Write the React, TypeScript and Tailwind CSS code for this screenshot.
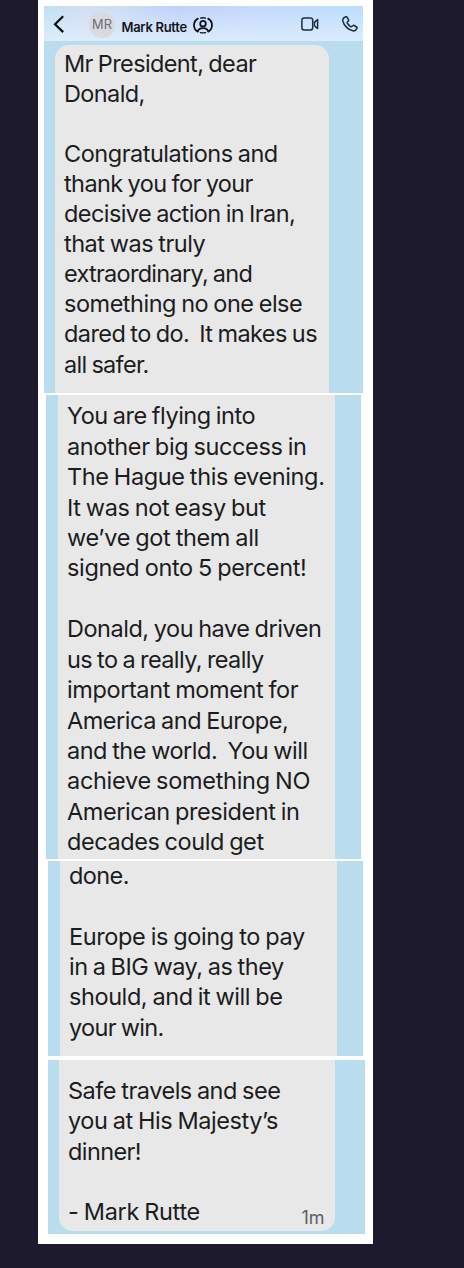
import type { ReactNode } from "react";

type Line = string | [text: string, tracking: string];

function Lines({ lines, className }: { lines: Line[]; className: string }) {
  return (
    <div className={`whitespace-pre text-[23.5px] ${className}`}>
      {lines.map((line, i) => {
        const [text, tracking] = typeof line === "string" ? [line, "tracking-[-0.48px]"] : line;
        return (
          <div key={i} className={tracking}>
            {text || "\u00a0"}
          </div>
        );
      })}
    </div>
  );
}

function Strip({ children, className }: { children: ReactNode; className: string }) {
  return <section className={`flex shrink-0 items-stretch bg-[#b9dcef] ${className}`}>{children}</section>;
}

function Header() {
  return (
    <header className="flex h-[35px] items-center bg-[linear-gradient(180deg,rgba(222,238,253,0)_0%,rgba(222,238,253,0.9)_100%),linear-gradient(90deg,#bfe0f5_0%,#d3deef_12%,#cbdcf5_24%,#bfd0fb_42%,#c5d8fc_65%,#b9defb_100%)]">
      <svg className="ml-[9px] h-[18px] w-3" viewBox="0 0 12 18" fill="none" stroke="#0b0d12" strokeWidth="2.2">
        <path d="M10.200 1.300 2 9.200l8.200 7.900" />
      </svg>
      <div className="ml-6 mt-[3px] flex size-[26px] items-center justify-center rounded-full bg-[#d9dade] text-[12.8px] text-[#6d6e73]">
        MR
      </div>
      <div className="ml-[6.500px] mt-[7px] text-[13px] font-semibold leading-4 tracking-[-0.3px] text-[#15161c] [word-spacing:0px]">Mark Rutte</div>
      <svg className="ml-[6px] mt-[3px] h-[17px] w-5" viewBox="0 0 20 17" fill="none" stroke="#101218" strokeWidth="1.800" strokeLinecap="round">
        <path d="M4.800 1.600C2.400 3 1 5.400 1 8.200s1.300 4.900 3.600 6.300M15.200 1.600C17.600 3 19 5.400 19 8.200s-1.300 4.900-3.600 6.300" />
        <path d="M7.600 1.100c1.600-.4 3.200-.4 4.800 0" strokeWidth="1.400" />
        <circle cx="10" cy="6.700" r="2.800" />
        <path d="M4.800 14.300c.6-2.200 2.400-3.200 5.200-3.200s4.600 1 5.200 3.200" />
        <path d="M7.400 15.600c1.700.4 3.500.4 5.200 0" strokeWidth="1.400" />
      </svg>
      <div className="ml-auto mr-[5px] mt-px flex items-center gap-[23px]">
        <svg className="h-[14px] w-[18px]" viewBox="0 0 18 14" fill="none" stroke="#1c2c3c" strokeWidth="1.500" strokeLinejoin="round">
          <rect x="0.900" y="1" width="10.800" height="12" rx="2.200" />
          <path d="M13.400 5.400 16.600 2.600v9l-3.200-2.800z" />
        </svg>
        <svg className="size-4" viewBox="0 0 16 16" fill="none" stroke="#1c2c3c" strokeWidth="1.500" strokeLinejoin="round">
          <path d="M2.300 1.500 3.700.8c.5-.2 1 0 1.300.4l1.500 2.500c.3.500.2 1-.2 1.400l-.9.900c-.3.300-.3.700-.1 1.100.8 1.500 2 2.700 3.500 3.500.4.200.8.200 1.100-.1l.9-.8c.4-.4.900-.5 1.400-.2l2.400 1.500c.5.300.6.800.4 1.300-.7 1.700-2.200 2.900-4.100 2.500C6.500 14 2 9.600.9 5.200c-.3-1.500.2-3 1.400-3.700z" />
        </svg>
      </div>
    </header>
  );
}

export default function App() {
  return (
    <main className="h-[1268px] w-[464px] overflow-hidden bg-[#1d1a2e] pl-[38px] font-['Inter',sans-serif] text-[#1c1c1e] [word-spacing:-1px]">
      <div className="flex h-[1244px] w-[335px] flex-col bg-white pt-[6px]">
        <div className="ml-[6px] flex h-[387px] w-[319px] flex-col">
          <Header />
          <Strip className="flex-1 pl-[11px] pt-1">
            <div className="w-[273.5px] rounded-t-[14px] bg-[#e8e8e8] pl-[9px] pt-[3.9px]">
              <Lines
                className="leading-[30.06px]"
                lines={[
                  ["Mr President, dear", "tracking-[-0.62px]"],
                  ["Donald,", "tracking-[-0.62px]"],
                  "",
                  "Congratulations and",
                  ["thank you for your", "tracking-[-0.6px]"],
                  ["decisive action in Iran,", "tracking-[-0.58px]"],
                  "that was truly",
                  ["extraordinary, and", "tracking-[-0.72px]"],
                  "something no one else",
                  ["dared to do.  It makes us", "tracking-[-0.58px]"],
                  ["all safer.", "tracking-[-0.7px]"],
                ]}
              />
            </div>
          </Strip>
        </div>
        <Strip className="ml-2 mt-[2px] h-[464px] w-[315px] pl-3">
          <div className="w-[276.5px] bg-[#e8e8e8] pl-[9px] pt-[6.2px]">
            <Lines
              className="leading-[30.43px]"
              lines={[
                "You are flying into",
                ["another big success in", "tracking-[-0.38px]"],
                ["The Hague this evening.", "tracking-[-0.38px]"],
                ["It was not easy but", "tracking-[-0.38px]"],
                ["we’ve got them all", "tracking-[-0.36px]"],
                ["signed onto 5 percent!", "tracking-[-0.35px]"],
                "",
                "Donald, you have driven",
                ["us to a really, really", "tracking-[-0.6px]"],
                ["important moment for", "tracking-[-0.4px]"],
                ["America and Europe,", "tracking-[-0.48px]"],
                "and the world.  You will",
                ["achieve something NO", "tracking-[-0.3px]"],
                ["American president in", "tracking-[-0.42px]"],
                ["decades could get", "tracking-[-0.43px]"],
              ]}
            />
          </div>
        </Strip>
        <Strip className="ml-[10px] mt-[2px] h-[195px] w-[315px] pl-3">
          <div className="w-[276.5px] bg-[#e8e8e8] pl-[9px]">
            <Lines
              className="-mt-[0.2px] leading-[30.4px]"
              lines={[
                ["done.", "tracking-[-0.6px]"],
                "",
                ["Europe is going to pay", "tracking-[-0.37px]"],
                "in a BIG way, as they",
                ["should, and it will be", "tracking-[-0.42px]"],
                ["your win.", "tracking-[-0.7px]"],
              ]}
            />
          </div>
        </Strip>
        <Strip className="ml-[9.500px] mt-1 h-[173.500px] w-[317.500px] pb-[2.500px] pl-[11.500px]">
          <div className="flex w-[276px] items-end justify-between rounded-b-[14px] bg-[#e8e8e8] pl-[9px] pr-[10.500px]">
            <Lines
              className="mb-[3.600px] leading-[30.300px]"
              lines={["Safe travels and see", ["you at His Majesty’s", "tracking-[-0.42px]"], ["dinner!", "tracking-[-0.6px]"], "", ["- Mark Rutte", "tracking-[-0.33px]"]]}
            />
            <time className="-ml-10 mb-[3px] text-[18px] leading-5 text-[#5d5d5f]">1m</time>
          </div>
        </Strip>
      </div>
    </main>
  );
}
